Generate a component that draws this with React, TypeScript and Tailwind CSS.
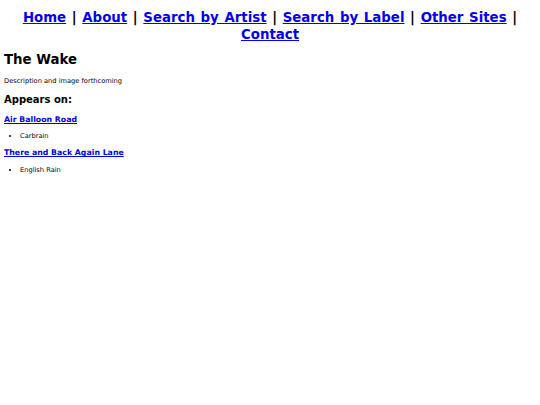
export default function App() {
  const links = ["Home", "About", "Search by Artist", "Search by Label", "Other Sites", "Contact"];
  return (
    <div className="min-h-screen bg-white text-black px-[4px] pt-[0.1px] text-[6.67px] leading-[1.25] font-['DejaVu_Sans',sans-serif]">
      <nav className="my-[8.5px] text-center text-[13.33px] font-bold leading-[17px] [word-spacing:1px]">
        {links.map((l, i) => (
          <span key={l}>
            <a href="#" className="text-[#0000ee] underline">
              {l}
            </a>
            {i < links.length - 1 && " | "}
          </span>
        ))}
      </nav>
      <h1 className="my-[9px] text-[13.33px] font-bold">The Wake</h1>
      <p className="my-[6px]">Description and image forthcoming</p>
      <h2 className="my-[8.3px] text-[10px] font-bold">Appears on:</h2>
      <h3 className="my-[7.8px] text-[7.8px] font-bold">
        <a href="#" className="text-[#0000ee] underline">Air Balloon Road</a>
      </h3>
      <ul className="my-[6.67px] list-disc pl-[16px]">
        <li>Carbrain</li>
      </ul>
      <h3 className="my-[7.8px] text-[7.8px] font-bold">
        <a href="#" className="text-[#0000ee] underline">There and Back Again Lane</a>
      </h3>
      <ul className="my-[6.67px] list-disc pl-[16px]">
        <li>English Rain</li>
      </ul>
    </div>
  );
}
